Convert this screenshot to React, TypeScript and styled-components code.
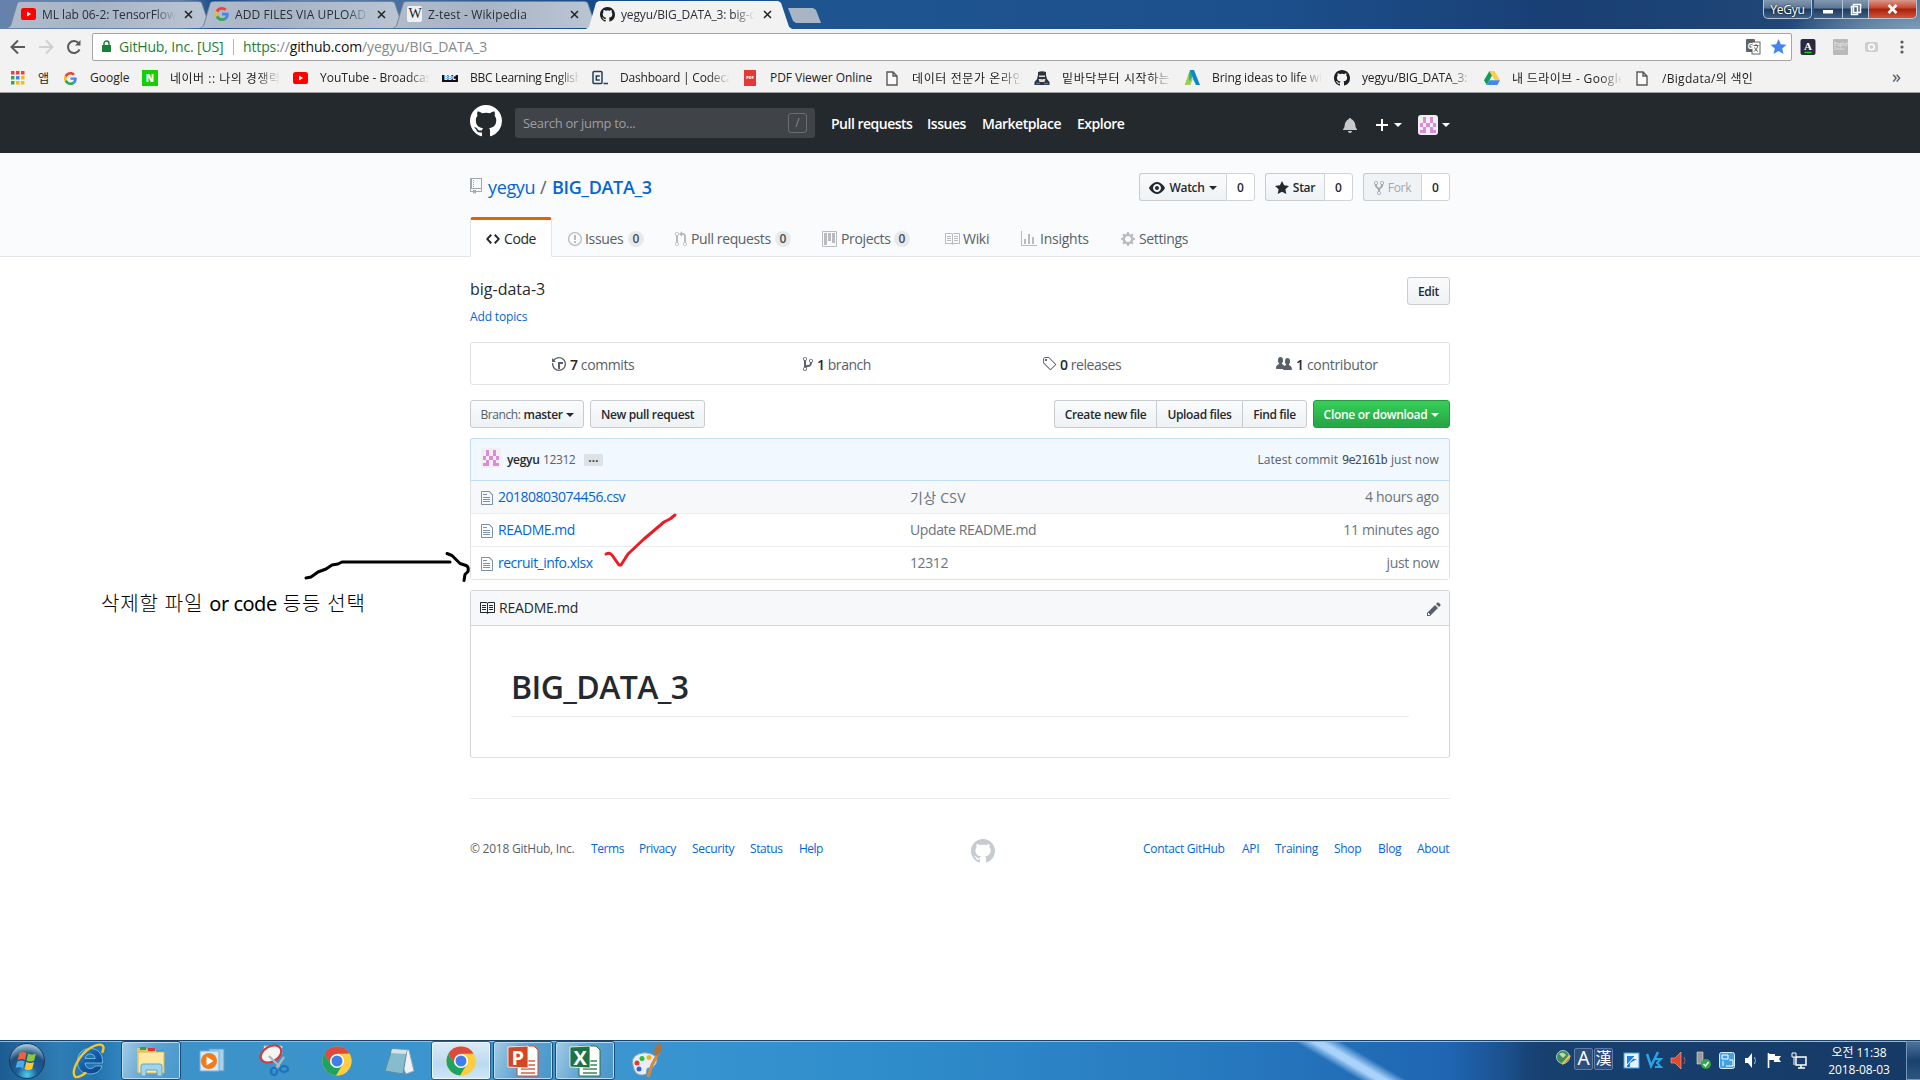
import React from 'react';
import styled, { createGlobalStyle, css } from 'styled-components';

const UI = '"Open Sans", "Noto Sans CJK KR", sans-serif';
const KR = '"Open Sans", "Noto Sans CJK KR", sans-serif';

const Global = createGlobalStyle`
  *, *::before, *::after { box-sizing: border-box; }
  body { margin: 0; background: #fff; font-family: ${UI}; color: #24292e; overflow: hidden; }
`;

/* ---------- shared ---------- */
const Screen = styled.div`
  position: relative; width: 1920px; height: 1080px; overflow: hidden;
  display: flex; flex-direction: column; background: #fff;
`;
const Label = styled.span<{ $w?: number; $ls?: number; $size?: number; $color?: string; $weight?: number; $fade?: boolean; $mr?: number }>`
  display: block; flex: none; white-space: nowrap; margin-right: ${p => p.$mr ?? 0}px;
  ${p => p.$w !== undefined && css`width: ${p.$w}px;`}
  letter-spacing: ${p => p.$ls ?? 0}px;
  ${p => p.$size && css`font-size: ${p.$size}px;`}
  ${p => p.$color && css`color: ${p.$color};`}
  ${p => p.$weight && css`font-weight: ${p.$weight};`}
  ${p => p.$fade && css`overflow: hidden; mask-image: linear-gradient(90deg, #000 calc(100% - 22px), transparent);`}
`;
const Caret = styled.i<{ $m?: number }>`
  display: block; flex: none; width: 0; height: 0; margin-left: ${p => p.$m ?? 4}px;
  border: 4px solid transparent; border-top-color: currentColor; border-bottom-width: 0;
`;

const OCT: Record<string, [number, string]> = {
  github: [16, 'M8 0C3.58 0 0 3.58 0 8c0 3.54 2.29 6.53 5.47 7.59.4.07.55-.17.55-.38 0-.19-.01-.82-.01-1.49-2.01.37-2.53-.49-2.69-.94-.09-.23-.48-.94-.82-1.13-.28-.15-.68-.52-.01-.53.63-.01 1.08.58 1.23.82.72 1.21 1.87.87 2.33.66.07-.52.28-.87.51-1.07-1.78-.2-3.64-.89-3.64-3.95 0-.87.31-1.59.82-2.15-.08-.2-.36-1.02.08-2.12 0 0 .67-.21 2.2.82.64-.18 1.32-.27 2-.27.68 0 1.36.09 2 .27 1.53-1.04 2.2-.82 2.2-.82.44 1.1.16 1.92.08 2.12.51.56.82 1.27.82 2.15 0 3.07-1.87 3.75-3.65 3.95.29.25.54.73.54 1.48 0 1.07-.01 1.93-.01 2.2 0 .21.15.46.55.38A8.013 8.013 0 0 0 16 8c0-4.42-3.58-8-8-8z'],
  repo: [12, 'M4 9H3V8h1v1zm0-3H3v1h1V6zm0-2H3v1h1V4zm0-2H3v1h1V2zm8-1v12c0 .55-.45 1-1 1H6v2l-1.5-1.5L3 16v-2H1c-.55 0-1-.45-1-1V1c0-.55.45-1 1-1h10c.55 0 1 .45 1 1zm-1 10H1v2h2v-1h3v1h5v-2zm0-10H2v9h9V1z'],
  code: [14, 'M9.5 3L8 4.5 11.5 8 8 11.5 9.5 13 14 8 9.5 3zm-5 0L0 8l4.5 5L6 11.5 2.5 8 6 4.5 4.5 3z'],
  issue: [14, 'M7 2.3c3.14 0 5.7 2.56 5.7 5.7s-2.56 5.7-5.7 5.7A5.71 5.71 0 0 1 1.3 8c0-3.14 2.56-5.7 5.7-5.7zM7 1C3.14 1 0 4.14 0 8s3.14 7 7 7 7-3.14 7-7-3.14-7-7-7zm1 3H6v5h2V4zm0 6H6v2h2v-2z'],
  pull: [12, 'M11 11.28V5c-.03-.78-.34-1.47-.94-2.06C9.46 2.35 8.78 2.03 8 2H7V0L4 3l3 3V4h1c.27.02.48.11.69.31.21.2.3.42.31.69v6.28A1.993 1.993 0 0 0 10 15a1.993 1.993 0 0 0 1-3.72zm-1 2.92c-.66 0-1.2-.55-1.2-1.2 0-.65.55-1.2 1.2-1.2.65 0 1.2.55 1.2 1.2 0 .65-.55 1.2-1.2 1.2zM4 3c0-1.11-.89-2-2-2a1.993 1.993 0 0 0-1 3.72v6.56A1.993 1.993 0 0 0 2 15a1.993 1.993 0 0 0 1-3.72V4.72c.59-.34 1-.98 1-1.72zm-.8 10c0 .66-.55 1.2-1.2 1.2-.65 0-1.2-.55-1.2-1.2 0-.65.55-1.2 1.2-1.2.65 0 1.2.55 1.2 1.2zM2 4.2C1.34 4.2.8 3.65.8 3c0-.65.55-1.2 1.2-1.2.65 0 1.2.55 1.2 1.2 0 .65-.55 1.2-1.2 1.2z'],
  project: [15, 'M10 12h3V2h-3v10zm-4-2h3V2H6v8zm-4 4h3V2H2v12zm-1 1h13V1H1v14zM14 0H1a1 1 0 0 0-1 1v14a1 1 0 0 0 1 1h13a1 1 0 0 0 1-1V1a1 1 0 0 0-1-1z'],
  book: [16, 'M3 5h4v1H3V5zm0 3h4V7H3v1zm0 2h4V9H3v1zm11-5h-4v1h4V5zm0 2h-4v1h4V7zm0 2h-4v1h4V9zm2-6v9c0 .55-.45 1-1 1H9.5l-1 1-1-1H2c-.55 0-1-.45-1-1V3c0-.55.45-1 1-1h5.5l1 1 1-1H15c.55 0 1 .45 1 1zm-8 .5L7.5 3H2v9h6V3.5zm7-.5H9.5l-.5.5V12h6V3z'],
  graph: [16, 'M16 14v1H0V0h1v14h15zM5 13H3V8h2v5zm4 0H7V3h2v10zm4 0h-2V6h2v7z'],
  gear: [14, 'M14 8.77v-1.6l-1.94-.64-.45-1.09.88-1.84-1.13-1.13-1.81.91-1.09-.45-.69-1.92h-1.6l-.63 1.94-1.11.45-1.84-.88-1.13 1.13.91 1.81-.45 1.09L0 7.23v1.59l1.94.64.45 1.09-.88 1.84 1.13 1.13 1.81-.91 1.09.45.69 1.92h1.59l.63-1.94 1.11-.45 1.84.88 1.13-1.13-.92-1.81.47-1.09L14 8.75v.02zM7 11c-1.66 0-3-1.34-3-3s1.34-3 3-3 3 1.34 3 3-1.34 3-3 3z'],
  eye: [16, 'M8.06 2C3 2 0 8 0 8s3 6 8.06 6C13 14 16 8 16 8s-3-6-7.94-6zM8 12c-2.2 0-4-1.78-4-4 0-2.2 1.8-4 4-4 2.22 0 4 1.8 4 4 0 2.22-1.78 4-4 4zm2-4c0 1.11-.89 2-2 2-1.11 0-2-.89-2-2 0-1.11.89-2 2-2 1.11 0 2 .89 2 2z'],
  star: [14, 'M14 6l-4.9-.64L7 1 4.9 5.36 0 6l3.6 3.26L2.67 14 7 11.67 11.33 14l-.93-4.74L14 6z'],
  fork: [10, 'M8 1a1.993 1.993 0 0 0-1 3.72V6L5 8 3 6V4.72A1.993 1.993 0 0 0 2 1a1.993 1.993 0 0 0-1 3.72V6.5l3 3v1.78A1.993 1.993 0 0 0 5 15a1.993 1.993 0 0 0 1-3.72V9.5l3-3V4.72A1.993 1.993 0 0 0 8 1zM2 4.2C1.34 4.2.8 3.65.8 3c0-.65.55-1.2 1.2-1.2.65 0 1.2.55 1.2 1.2 0 .65-.55 1.2-1.2 1.2zm3 10c-.66 0-1.2-.55-1.2-1.2 0-.65.55-1.2 1.2-1.2.65 0 1.2.55 1.2 1.2 0 .65-.55 1.2-1.2 1.2zm3-10c-.66 0-1.2-.55-1.2-1.2 0-.65.55-1.2 1.2-1.2.65 0 1.2.55 1.2 1.2 0 .65-.55 1.2-1.2 1.2z'],
  history: [14, 'M8 13H6V6h5v2H8v5zM7 1C4.81 1 2.87 2.02 1.59 3.59L0 2v4h4L2.5 4.5C3.55 3.17 5.17 2.3 7 2.3c3.14 0 5.7 2.56 5.7 5.7s-2.56 5.7-5.7 5.7A5.71 5.71 0 0 1 1.3 8c0-.34.03-.67.09-1H.08C.03 7.33 0 7.66 0 8c0 3.86 3.14 7 7 7s7-3.14 7-7-3.14-7-7-7z'],
  branch: [10, 'M10 5c0-1.11-.89-2-2-2a1.993 1.993 0 0 0-1 3.72v.3c-.02.52-.23.98-.63 1.38-.4.4-.86.61-1.38.63-.83.02-1.48.16-2 .45V4.72a1.993 1.993 0 0 0-1-3.72C.88 1 0 1.89 0 3a2 2 0 0 0 1 1.72v6.56c-.59.35-1 .99-1 1.72 0 1.11.89 2 2 2 1.11 0 2-.89 2-2 0-.53-.2-1-.53-1.36.09-.06.48-.41.59-.47.25-.11.56-.17.94-.17 1.05-.05 1.95-.45 2.75-1.25S8.95 7.77 9 6.73h-.02C9.59 6.37 10 5.73 10 5zM2 1.8c.66 0 1.2.55 1.2 1.2 0 .65-.55 1.2-1.2 1.2C1.35 4.2.8 3.65.8 3c0-.65.55-1.2 1.2-1.2zm0 12.41c-.66 0-1.2-.55-1.2-1.2 0-.65.55-1.2 1.2-1.2.65 0 1.2.55 1.2 1.2 0 .65-.55 1.2-1.2 1.2zm6-8c-.66 0-1.2-.55-1.2-1.2 0-.65.55-1.2 1.2-1.2.65 0 1.2.55 1.2 1.2 0 .65-.55 1.2-1.2 1.2z'],
  tag: [14, 'M7.685 1.72a2.49 2.49 0 0 0-1.76-.726H3.48A2.5 2.5 0 0 0 .994 3.48v2.456c0 .656.269 1.292.726 1.76l6.024 6.024a.99.99 0 0 0 1.402 0l4.563-4.563a.99.99 0 0 0 0-1.402L7.685 1.72zM2.366 7.048A1.54 1.54 0 0 1 1.9 5.925V3.48c0-.874.716-1.58 1.58-1.58h2.456c.418 0 .825.159 1.123.467l6.104 6.094-4.702 4.702-6.094-6.115zm.588-4.103h2v2h-2v-2z'],
  people: [16, 'M16 12.999c0 .439-.45 1-1 1H7.995c-.539 0-.994-.447-.995-.999H1c-.54 0-1-.561-1-1 0-2.634 3-4 3-4s.229-.409 0-1c-.841-.621-1.058-.59-1-3 .058-2.419 1.367-3 2.5-3s2.442.58 2.5 3c.058 2.41-.159 2.379-1 3-.229.59 0 1 0 1s1.549.711 2.42 2.088C9.196 9.369 10 8.999 10 8.999s.229-.409 0-1c-.841-.621-1.058-.59-1-3 .058-2.419 1.367-3 2.5-3s2.437.581 2.495 3c.059 2.41-.158 2.379-1 3-.229.59 0 1 0 1s3.005 1.366 3.005 4z'],
  file: [12, 'M6 5H2V4h4v1zM2 8h7V7H2v1zm0 2h7V9H2v1zm0 2h7v-1H2v1zm10-7.5V14c0 .55-.45 1-1 1H1c-.55 0-1-.45-1-1V2c0-.55.45-1 1-1h7.5L12 4.5zM11 5L8 2H1v12h10V5z'],
  bell: [14, 'M14 12v1H0v-1l.73-.58c.77-.77.81-2.55 1.19-4.42C2.69 3.23 6 2 6 2c0-.55.45-1 1-1s1 .45 1 1c0 0 3.39 1.23 4.16 5 .38 1.88.42 3.66 1.19 4.42l.66.58H14zm-7 4c1.11 0 2-.89 2-2H5c0 1.11.89 2 2 2z'],
  plus: [12, 'M12 9H7v5H5V9H0V7h5V2h2v5h5v2z'],
  pencil: [14, 'M0 12v3h3l8-8-3-3-8 8zm3 2H1v-2h1v1h1v1zm10.3-9.3L12 6 9 3l1.3-1.3a.996.996 0 0 1 1.41 0l1.59 1.59c.39.39.39 1.02 0 1.41z'],
};
const IconSvg = styled.svg<{ $c?: string; $mr?: number }>`
  display: block; flex: none; fill: ${p => p.$c ?? 'currentColor'}; margin-right: ${p => p.$mr ?? 0}px;
`;
const Oct = ({ n, c, mr, s = 16 }: { n: string; c?: string; mr?: number; s?: number }) => (
  <IconSvg viewBox={`0 0 ${OCT[n][0]} 16`} width={(OCT[n][0] * s) / 16} height={s} $c={c} $mr={mr}>
    <path fillRule="evenodd" d={OCT[n][1]} />
  </IconSvg>
);
const CELLS = [[1, 0], [3, 0], [1, 1], [3, 1], [0, 2], [2, 2], [4, 2], [1, 3], [3, 3], [0, 4], [1, 4], [3, 4], [4, 4]];
const AvatarSvg = styled.svg<{ $ml?: number }>`display: block; flex: none; border-radius: 3px; background: #f0f0f0; margin-left: ${p => p.$ml ?? 0}px;`;
const Avatar = ({ ml }: { ml?: number }) => (
  <AvatarSvg $ml={ml} width="20" height="20" viewBox="0 0 12 12" shapeRendering="crispEdges">
    {CELLS.map(([x, y]) => <rect key={`${x}${y}`} x={1 + x * 2} y={1 + y * 2} width="2" height="2" fill="#dd8ad9" />)}
  </AvatarSvg>
);

/* ---------- browser chrome ---------- */
const TitleBar = styled.div`
  height: 29px; flex: none; display: flex; align-items: flex-start; padding-left: 7px; position: relative;
  background: radial-gradient(ellipse 130px 26px at 100% 100%, #7f9cb6, transparent), linear-gradient(90deg, #6482ab 0, #6482ab 180px, #164a86 215px, #6482ab 300px, #164a86 590px, #1e5590 800px, #1c508d 1250px, #193f74 1560px, #1f4676 1780px, #56789c 1920px);
`;
const TabShape = styled.div<{ $active?: boolean }>`
  width: 206px; height: ${p => (p.$active ? 28 : 27)}px; margin: 1px -13px 0 0; flex: none; position: relative;
  z-index: ${p => (p.$active ? 2 : 1)};
  background: ${p => (p.$active ? '#f2f2f2' : '#6f83a0')};
  clip-path: polygon(0 100%, 3px 92%, 10px 6%, 13px 0, 192px 0, 195px 6%, 203px 92%, 206px 100%);
`;
const TabBody = styled.div<{ $active?: boolean }>`
  height: 100%; display: flex; align-items: center; padding-left: 14px; padding-bottom: ${p => (p.$active ? 2 : 1)}px;
  background: ${p => (p.$active ? '#f2f2f2' : 'linear-gradient(90deg, #b0bccb, #a7b4c6 40%, #bbc6d4)')};
  clip-path: ${p => (p.$active ? 'none' : 'polygon(1px 100%, 4px 92%, 11px 6%, 14px 1px, 191px 1px, 194px 6%, 202px 92%, 205px 100%)')};
  font-size: 12px; color: #2b2f36;
`;
const TabIcon = styled.span`width: 15px; margin-right: 6px; display: flex; justify-content: center;`;
const CloseSlot = styled.span`margin-left: 8px; display: flex;`;
const NewTab = styled.div`
  width: 33px; height: 15px; margin: 8px 0 0 9px; background: #a7b5c4; clip-path: polygon(0 0, 25px 0, 28px 2px, 33px 15px, 8px 15px, 5px 13px);
`;
const WinButtons = styled.div`
  margin-left: auto; margin-right: 3px; display: flex; height: 19px;
`;
const WinBtn = styled.div<{ $w: number; $kind?: 'close' | 'user' }>`
  width: ${p => p.$w}px; height: 19px; border: 1px solid #b5c3d2; border-top: 0; border-left-width: ${p => (p.$kind === 'user' ? 1 : 0)}px;
  ${p => p.$kind === 'user' && 'margin-right: 2px; border-radius: 0 0 5px 5px;'}
  ${p => p.$kind === 'close' && 'border-radius: 0 0 5px 0;'}
  background: ${p => (p.$kind === 'close' ? 'linear-gradient(#d99a8c, #c4452d 45%, #a91f0a 50%, #d0573a)' : 'linear-gradient(#8398b0, #5c7794 45%, #1c3a5e 50%, #3f6187)')};
  display: flex; align-items: center; justify-content: center; color: #fff; font: 12px ${UI}; letter-spacing: -.2px; text-shadow: 0 0 2px #000;
`;
const Toolbar = styled.div`
  height: 37px; flex: none; background: #f2f2f2; display: flex; align-items: center; padding: 0 0 1px 10px;
`;
const NavIcons = styled.svg`display: block; flex: none; width: 82px; height: 20px;`;
const UrlBar = styled.div`
  width: 1700px; height: 28px; border: 1px solid #a5a5a5; border-radius: 2px; background: #fff; flex: none;
  display: flex; align-items: center; padding-left: 9px; font-size: 14px; padding-bottom: 1px;
`;
const Lock = styled.svg`display: block; flex: none; margin-right: 8px;`;
const Secure = styled.span`color: #188038;`;
const Host = styled.span`color: #111;`;
const Divider = styled.span`width: 1px; height: 16px; background: #b5b5b5; margin: 0 9px;`;
const BarTail = styled.svg`display: block; margin-left: auto; margin-right: 2px;`;
const ExtIcons = styled.svg`display: block; flex: none;`;
const Bookmarks = styled.div`
  height: 27px; flex: none; background: #f2f2f2; border-bottom: 1px solid #a0a0a0; display: flex; align-items: center;
  padding: 0 0 2px 10px; font: 12px ${KR}; color: #222;
`;
const Mark = styled.div<{ $w: number }>`
  width: ${p => p.$w}px; flex: none; display: flex; align-items: center; height: 24px;
  & > ${Label} { margin-top: -1px; }
`;
const MarkIcon = styled.span`width: 16px; height: 24px; display: flex; align-items: center; justify-content: center; margin-right: 12px; flex: none;`;
const Chip = styled.b<{ $bg: string; $w?: number; $h?: number; $fs?: number; $r?: number; $c?: string }>`
  width: ${p => p.$w ?? 16}px; height: ${p => p.$h ?? 16}px; background: ${p => p.$bg}; color: ${p => p.$c ?? '#fff'}; border-radius: ${p => p.$r ?? 0}px;
  display: flex; align-items: center; justify-content: center; font-size: ${p => p.$fs ?? 10}px; line-height: 1; font-weight: 800; flex: none;
`;
const WikiChip = styled(Chip)`font-family: "Liberation Serif", serif; font-weight: 400; font-size: 14px; letter-spacing: -1px;`;
const MoreMarks = styled.span`margin: 0 19px 4px auto; font-size: 18px; color: #555;`;

const GoogleG = ({ s = 14 }: { s?: number }) => (
  <svg width={s} height={s} viewBox="0 0 48 48">
    <path fill="#EA4335" d="M24 9.5c3.54 0 6.71 1.22 9.21 3.6l6.85-6.85C35.9 2.38 30.47 0 24 0 14.62 0 6.51 5.38 2.56 13.22l7.98 6.19C12.43 13.72 17.74 9.5 24 9.5z" />
    <path fill="#4285F4" d="M46.98 24.55c0-1.57-.15-3.09-.38-4.55H24v9.02h12.94c-.58 2.96-2.26 5.48-4.78 7.18l7.73 6c4.51-4.18 7.09-10.36 7.09-17.65z" />
    <path fill="#FBBC05" d="M10.53 28.59c-.48-1.45-.76-2.99-.76-4.59s.27-3.14.76-4.59l-7.98-6.19C.92 16.46 0 20.12 0 24c0 3.88.92 7.54 2.56 10.78l7.97-6.19z" />
    <path fill="#34A853" d="M24 48c6.48 0 11.93-2.13 15.89-5.81l-7.73-6c-2.15 1.45-4.92 2.3-8.16 2.3-6.26 0-11.57-4.22-13.47-9.91l-7.98 6.19C6.51 42.62 14.62 48 24 48z" />
  </svg>
);
const YouTube = () => (
  <svg width="15" height="12" viewBox="0 0 15 12"><rect width="15" height="12" rx="2.6" fill="#f00" /><path d="M6 3.5l4 2.5L6 8.5z" fill="#fff" /></svg>
);
const Codecademy = () => (
  <svg width="16" height="16" viewBox="0 0 16 16" fill="none" stroke="#204056" strokeWidth="1.5">
    <rect x="1" y="1.5" width="9" height="12" rx="1" /><path d="M7.8 6H4.3v4h3.5M11.5 13.5H16" />
  </svg>
);
const PageIcon = () => (
  <svg width="12" height="15" viewBox="0 0 12 15"><path d="M1 1h6l4 4v9H1zM7 1v4h4" fill="#fafafa" stroke="#5a5a5a" strokeWidth="1.4" /></svg>
);
const Penguin = () => (
  <svg width="16" height="15" viewBox="0 0 16 15"><path d="M4 1q4-1.5 8 0v3l1 4 2.5 3v3H.5v-3L3 8l1-4z" fill="#2b3347" /><path d="M5 4.5h6V6H5zM4.5 8h3l.5 1 .5-1h3l-1 3h-5z" fill="#e5d9c8" /><path d="M2 12.5h4M10 12.5h4" stroke="#4a73b8" strokeWidth="1.5" /></svg>
);
const Autodesk = () => (
  <svg width="15" height="16" viewBox="0 0 15 16"><path d="M0 15L5 0h4L5 15z" fill="#3fae7d" /><path d="M0 15l4-12v8l4-2-3 6z" fill="#9fd14b" /><path d="M5 0h4l6 15h-4L8 9z" fill="#0b8ac9" /></svg>
);
const DriveIcon = () => (
  <svg width="16" height="14" viewBox="0 0 16 14"><path d="M5.5 0L0 9.3 2.7 14 8 4.5z" fill="#0f9d58" /><path d="M5.5 0h5L16 9.3h-5.3z" fill="#ffcd40" /><path d="M5.4 9.3H16L13.3 14H2.7z" fill="#4285f4" /></svg>
);
const Close = () => (
  <svg width="9" height="9" viewBox="0 0 9 9"><path d="M1 1l7 7M8 1L1 8" stroke="#222" strokeWidth="1.5" /></svg>
);

const TABS: { t: string; ls: number; icon: React.ReactNode; active?: boolean }[] = [
  { t: 'ML lab 06-2: TensorFlow로', ls: -0.05, icon: <YouTube /> },
  { t: 'ADD FILES VIA UPLOAD -', ls: 0.08, icon: <GoogleG /> },
  { t: 'Z-test - Wikipedia', ls: 0.15, icon: <WikiChip $bg="#eef1f4" $w={15} $h={16} $c="#222" $r={2}>W</WikiChip> },
  { t: 'yegyu/BIG_DATA_3: big-data', ls: -0.15, icon: <Oct n="github" s={15} c="#1b1f23" />, active: true },
];
const MARKS: { t: string; w?: number; tw?: number; ls?: number; icon: React.ReactNode }[] = [
  { t: 'Google', w: 80, tw: 50, icon: <GoogleG s={13} /> },
  { t: '네이버 :: 나의 경쟁력', ls: 0.5, icon: <Chip $bg="#19ce00" $h={16}>N</Chip> },
  { t: 'YouTube - Broadcast', icon: <YouTube /> },
  { t: 'BBC Learning English', ls: -0.3, icon: <Chip $bg="#111" $h={7} $fs={6}>BBC</Chip> },
  { t: 'Dashboard | Codecademy', ls: -0.2, icon: <Codecademy /> },
  { t: 'PDF Viewer Online', w: 142, tw: 110, ls: -0.05, icon: <Chip $bg="#e53935" $w={12} $h={16} $fs={4}>PDF</Chip> },
  { t: '데이터 전문가 온라인', ls: 0.6, icon: <PageIcon /> },
  { t: '밑바닥부터 시작하는 딥', ls: 0.6, icon: <Penguin /> },
  { t: 'Bring ideas to life with', ls: -0.1, icon: <Autodesk /> },
  { t: 'yegyu/BIG_DATA_3: big', ls: -0.15, icon: <Oct n="github" s={16} c="#1b1f23" /> },
  { t: '내 드라이브 - Google', ls: 0.35, icon: <DriveIcon /> },
  { t: '/Bigdata/의 색인', ls: 0.3, icon: <PageIcon /> },
];

/* ---------- GitHub header ---------- */
const GhHeader = styled.header`
  height: 60px; flex: none; background: #24292e; padding: 0 470px; display: flex; align-items: center; color: #fff;
`;
const LogoBox = styled.span`margin: -4px 13px 0 0; align-self: center;`;
const Search = styled.div`
  width: 300px; height: 30px; border-radius: 3px; background: #404448; display: flex; align-items: center; justify-content: space-between;
  padding: 0 8px; font-size: 13px; color: #9c9fa3; margin-right: 16px; flex: none;
`;
const SlashKey = styled.span`
  width: 19px; height: 20px; border: 1px solid #6a6d71; border-radius: 3px; font-size: 12px; text-align: center; line-height: 17px; color: #85888c;
`;
const NavLink = styled.a<{ $w: number; $ls: number }>`
  width: ${p => p.$w}px; letter-spacing: ${p => p.$ls}px; font-size: 14px; font-weight: 600; white-space: nowrap; flex: none; color: #fff; padding-top: 1px;
`;
const UserTools = styled.div`margin-left: auto; display: flex; align-items: center; padding-top: 4px;`;

/* ---------- repo head ---------- */
const RepoHead = styled.section`
  height: 104px; flex: none; padding: 20px 470px 0; background: #fafbfc; border-bottom: 1px solid #e1e4e8;
  display: flex; flex-direction: column; justify-content: space-between;
`;
const TitleRow = styled.div`display: flex; align-items: center; height: 28px;`;
const RepoName = styled.h1`
  margin: 0; display: flex; align-items: center; font-size: 18px; font-weight: 400; line-height: 28px; color: #0366d6;
  & > svg { margin-top: -2px; }
`;
const Actions = styled.div`margin-left: auto; display: flex; gap: 10px;`;
const Group = styled.div`display: flex; height: 28px;`;
const Btn = styled.button<{ $w: number; $first?: boolean; $last?: boolean; $flat?: boolean; $green?: boolean; $off?: boolean; $ls?: number }>`
  width: ${p => p.$w}px; height: 28px; padding: 1px 0 0; flex: none; display: flex; align-items: center; justify-content: center;
  border: 1px solid #c9cccf; font: 600 12px ${UI}; letter-spacing: ${p => p.$ls ?? -0.3}px; color: #24292e; white-space: nowrap;
  background: linear-gradient(-180deg, #fafbfc, #eff3f6 90%);
  border-radius: ${p => (p.$first ? '3px 0 0 3px' : p.$last ? '0 3px 3px 0' : p.$flat ? '0' : '3px')};
  ${p => (p.$first || p.$flat) && 'border-right: 0;'}
  ${p => p.$off && 'color: #a3a7ab; background: #eff3f6; font-weight: 400;'}
  ${p => p.$green && 'color: #fff; border-color: #2a9742; background: linear-gradient(-180deg, #34d058, #28a745 90%);'}
`;
const Count = styled.span<{ $w: number }>`
  width: ${p => p.$w}px; height: 28px; border: 1px solid #d1d4d7; border-radius: 0 3px 3px 0; background: #fff;
  display: flex; align-items: center; justify-content: center; font-size: 12px; font-weight: 600;
`;
const Tabs = styled.nav`display: flex; height: 40px; margin-bottom: -1px; font-size: 14px; color: #586069;`;
const RepoTab = styled.a<{ $w: number; $on?: boolean }>`
  width: ${p => p.$w}px; height: 40px; flex: none; display: flex; align-items: center; padding: 1px 0 0 15px;
  border: 1px solid transparent; border-top: 3px solid transparent;
  ${p => p.$on && css`background: #fff; border-color: #e36209 #e1e4e8 transparent; border-radius: 3px 3px 0 0; color: #24292e;`}
`;
const Counter = styled.span`
  height: 16px; width: 16px; margin-left: 5px; border-radius: 10px; background: #e7e9eb; font-size: 12px; font-weight: 600; line-height: 15px; text-align: center; color: #444d56;
`;
const TabText = styled.span<{ $w: number; $ls: number }>`
  width: ${p => p.$w}px; letter-spacing: ${p => p.$ls}px; white-space: nowrap; flex: none; padding-bottom: 1px;
`;

/* ---------- repo content ---------- */
const Main = styled.main`width: 980px; margin-left: 470px; flex: 1; display: flex; flex-direction: column;`;
const AboutRow = styled.div`display: flex; justify-content: space-between; align-items: flex-start; padding-top: 20px; height: 85px;`;
const AboutText = styled.div`display: flex; flex-direction: column; gap: 4px; & > span:first-child { line-height: 24px; } & > a { line-height: 24px; font-size: 12px; letter-spacing: -.15px; color: #0366d6; }`;
const Stats = styled.div`
  height: 43px; border: 1px solid #dfe2e5; border-radius: 3px; display: flex; align-items: center; font-size: 14px; color: #586069; padding: 1px 0 0 81px;
`;
const Stat = styled.span<{ $w: number; $ls?: number }>`
  width: ${p => p.$w}px; letter-spacing: ${p => p.$ls ?? -0.36}px; flex: none; display: flex; align-items: center; gap: 4px; white-space: nowrap;
  & b { font-weight: 600; color: #24292e; }
`;
const FileNav = styled.div`display: flex; gap: 6px; margin-top: 15px; height: 28px;`;
const FileBtns = styled.div`display: flex; margin-left: auto;`;
const FilesBox = styled.div`margin-top: 10px; border: 1px solid #dfe2e5; border-radius: 3px; height: 142px;`;
const Commit = styled.div`
  height: 43px; margin: -1px -1px 0; border: 1px solid #c0ddfb; border-radius: 3px 3px 0 0; background: #f1f8ff;
  display: flex; align-items: center; padding: 0 10px; font-size: 12px; color: #586069; padding-bottom: 1px;
  & > svg { margin-right: 6px; margin-top: -2px; }
`;
const Dots = styled.span`
  width: 19px; height: 12px; background: #dfe2e5; border-radius: 1px; margin: 2px 0 0 9px; font-size: 12px; font-weight: 700; line-height: 8px; text-align: center; color: #444d56;
`;
const Latest = styled.span`margin-left: auto; display: flex; align-items: baseline; gap: 4px; letter-spacing: .08px;`;
const Hash = styled.code`font: 12px "DejaVu Sans Mono", monospace; letter-spacing: -.8px; color: #444d56;`;
const FileRow = styled.div<{ $hover?: boolean }>`
  height: ${p => (p.$hover ? 32 : 33)}px; display: flex; align-items: center; padding: 0 10px; font-size: 14px; color: #6a737d;
  background: ${p => (p.$hover ? '#f6f8fa' : '#fff')}; padding-bottom: 1px;
  & > svg { margin-top: 2px; }
  & + & { border-top: 1px solid #eaecef; }
`;
const Age = styled.span<{ $ls: number }>`margin-left: auto; letter-spacing: ${p => p.$ls}px;`;
const Readme = styled.article`margin-top: 10px; height: 168px; border: 1px solid #d1d5da; border-bottom-color: #dfe2e5; border-radius: 3px;`;
const ReadmeHead = styled.h3`
  margin: 0; height: 35px; background: #f6f8fa; border-bottom: 1px solid #d1d5da; display: flex; align-items: center; padding: 0 9px 1px 8px;
  font-size: 14px; font-weight: 500; & svg:last-child { margin-left: auto; margin-right: -1px; margin-top: 2px; }
`;
const ReadmeBody = styled.div`padding: 41px 40px 0;`;
const Heading = styled.h1`
  margin: 0; height: 50px; border-bottom: 1px solid #eaecef; font-size: 32px; font-weight: 600; line-height: 40px; letter-spacing: -.6px;
`;
const Footer = styled.footer`
  margin-top: 40px; border-top: 1px solid #eaecef; padding-top: 24px; display: flex; align-items: center; height: 76px; font-size: 12px; color: #586069;
`;
const FootLink = styled.a<{ $w: number; $ls?: number; $plain?: boolean }>`
  width: ${p => p.$w}px; letter-spacing: ${p => p.$ls ?? -0.3}px; flex: none; white-space: nowrap; color: ${p => (p.$plain ? '#586069' : '#0366d6')};
`;
const FootLogo = styled.span`margin: 5px 0 0 148px; width: 172px;`;

/* ---------- annotations drawn over the page ---------- */
const Ink = styled.svg`position: absolute; left: 290px; top: 500px; width: 400px; height: 100px; fill: none; stroke-linecap: round; stroke-linejoin: round; pointer-events: none;`;
const Note = styled.div`position: absolute; left: 101px; top: 590px; font: 300 20px/28px "Noto Sans", "Noto Sans CJK KR", sans-serif; letter-spacing: .85px; white-space: nowrap; color: #000; & b { font-weight: 400; letter-spacing: -.5px; }`;

/* ---------- Windows taskbar ---------- */
const Taskbar = styled.div`
  height: 40px; flex: none; border-top: 1px solid #1d4368; box-shadow: inset 0 1px 0 #8fbfe0; display: flex; align-items: stretch; position: relative;
  background: linear-gradient(90deg, transparent 1510px, #17406f 1550px, #163a66 1920px),
    linear-gradient(30.5deg, transparent 690px, #a9d3fb 699px, #a9d3fb 704px, transparent 714px),
    linear-gradient(90deg, #1c5c92 0, #2f7db4 60px, #2273ae 95px, #3c92c8 140px, #3b96d0 600px, #2f8ccb 900px, #2677bd 1250px, #1f65b2 1450px, #17406f 1550px);
`;
const StartSlot = styled.div`width: 53px; display: flex; align-items: center; justify-content: center; margin-right: 6px;`;
const Task = styled.div<{ $open?: boolean; $active?: boolean }>`
  width: 60px; margin-right: 2px; flex: none; display: flex; align-items: center; justify-content: center; border-radius: 3px; border: 1px solid transparent;
  ${p => p.$open && 'border-color: #1d4c76; background: linear-gradient(110deg, #a5cbe5, #5ba3d2 50%, #4897cc); box-shadow: inset 0 0 0 1px #b9dcf2;'}
  ${p => p.$active && 'border-color: #2a5f8c; background: linear-gradient(#dcebf6, #bcd9ee 60%, #cfe8f8); box-shadow: inset 0 0 0 1px #eef8ff;'}
`;
const Tray = styled.div`margin-left: auto; display: flex; align-items: center; color: #fff;`;
const TrayGlobe = styled.svg`display: block; margin: -5px 1px 0 0;`;
const Ime = styled.span<{ $fs: number }>`
  width: 19px; height: 22px; margin-right: 1px; margin-top: -4px; border: 1px solid #5d7ea6; border-radius: 2px; background: #2c4f7c; font-size: ${p => p.$fs}px; line-height: 18px; text-align: center; font-family: "Noto Sans", "Noto Sans CJK KR", sans-serif;
`;
const TrayIcons = styled.svg`display: block; flex: none; margin-top: 1px;`;
const Clock = styled.div`width: 94px; text-align: center; font: 12px ${KR}; letter-spacing: -.1px; line-height: 17px; padding-top: 1px;`;
const ShowDesktop = styled.div`width: 14px; height: 39px; border: 1px solid #7795b8; border-right: 0; background: linear-gradient(#4d729b, #1a416e 50%, #2c5680);`;

const Chrome = () => (
  <svg width="30" height="30" viewBox="0 0 30 30">
    <circle cx="15" cy="15" r="14.5" fill="#fbc116" />
    <path d="M2.4 7.8A14.5 14.5 0 0 1 27.6 7.8L15 8.2l-6.4 10z" fill="#dd4b3e" />
    <path d="M2.4 7.8A14.5 14.5 0 0 0 14 29.5l6.5-10.8H9z" fill="#1ea362" />
    <path d="M27.6 7.8H15l5.8 11L14.5 29.5A14.5 14.5 0 0 0 27.6 7.8z" fill="#ffcd40" />
    <circle cx="15" cy="15" r="7" fill="#fff" /><circle cx="15" cy="15" r="5.5" fill="#3f7fe8" />
  </svg>
);
const StartOrb = () => (
  <svg width="38" height="38" viewBox="0 0 38 38">
    <defs><radialGradient id="orb" cx="50%" cy="90%" r="85%"><stop offset="0" stopColor="#4fd0f0" /><stop offset=".35" stopColor="#1b5f9a" /><stop offset=".7" stopColor="#1d4f7e" /><stop offset="1" stopColor="#a3c1d6" /></radialGradient></defs>
    <circle cx="19" cy="19" r="17.5" fill="url(#orb)" stroke="#163a5e" />
    <path d="M11.5 11q3.5-2 7 0L17 18q-3.500-2-7.500 0z" fill="#f0623a" /><path d="M20 11.5q4 2 8 0l-1.8 7q-3.5 2-7.7 0z" fill="#8cc63f" />
    <path d="M9.2 19.5q4-2 7.5 0l-1.6 7q-3.5-2-7.5-.5z" fill="#4fa8e8" /><path d="M18.2 20q4 2 7.8 0l-1.8 7q-4 2-7.5 0z" fill="#fdc92f" />
  </svg>
);
const IE = () => (
  <svg width="36" height="38" viewBox="0 0 36 38">
    <defs><linearGradient id="ie" x1="0" y1="0" x2="1" y2="1"><stop offset="0" stopColor="#3ba4e4" /><stop offset=".4" stopColor="#1460ab" /><stop offset="1" stopColor="#0c3f86" /></linearGradient></defs>
    <path fillRule="evenodd" d="M19 6.5c8 0 13 5.5 12.5 14.500H14c.3 3.500 2.200 5.500 5.300 5.500 2.200 0 3.700-.8 4.700-2.500h7C29.500 29 25 32 19 32 11 32 6.500 27 6.500 19.500S11 6.500 19 6.500zM14.200 16.500h10c-.3-3-2.100-4.500-5-4.500s-4.600 1.500-5 4.500z" fill="url(#ie)" stroke="#8fd6f8" strokeWidth=".7" />
    <path d="M4.500 35C-.5 31 7 13 20 5.500 29 .5 35 2 31.500 10M4.500 35q3 1 10-4" fill="none" stroke="#f6c62d" strokeWidth="2.400" strokeLinecap="round" />
  </svg>
);
const Explorer = () => (
  <svg width="34" height="34" viewBox="0 0 34 34">
    <path d="M3 4h9l2 2h15v22H3z" fill="#e9c95c" /><path d="M6 3h6v3H6z" fill="#3c9a4f" /><path d="M14 4h7v3h-7z" fill="#d33" /><path d="M22 6h8v3h-8z" fill="#39c" />
    <path d="M4 8h26v21H4z" fill="#fbe9a2" stroke="#d8b64a" /><path d="M7 32V22q0-2 2-2h17q2 0 2 2v10h-5v-6H12v6z" fill="#9fd4ef" stroke="#5fa5cf" />
  </svg>
);
const Media = () => (
  <svg width="28" height="28" viewBox="0 0 28 28"><path d="M10 2h15v22H10z" fill="#a8d1ec" stroke="#5d9bc8" /><path d="M1 4h19v20H1z" fill="#d5e9f7" stroke="#79add2" /><circle cx="10" cy="14" r="8" fill="#f07b1a" /><path d="M7.5 9.5l7 4.5-7 4.5z" fill="#fff" /></svg>
);
const Snip = () => (
  <svg width="32" height="36" viewBox="0 0 32 36">
    <path d="M5 3h18v8H5z" fill="#e9f1f7" stroke="#b9c6d0" strokeDasharray="2 1" />
    <ellipse cx="12" cy="11" rx="11" ry="7.500" transform="rotate(-30 12 11)" fill="#f4f4f4" stroke="#d33c3c" strokeWidth="2.200" />
    <path d="M10 13l12 12M25 14l-9 13" stroke="#a9b8c4" strokeWidth="2.400" />
    <ellipse cx="15" cy="28.500" rx="3" ry="3.600" fill="none" stroke="#1e73be" strokeWidth="2.400" /><ellipse cx="25" cy="26" rx="4" ry="3" fill="none" stroke="#1e73be" strokeWidth="2.400" />
  </svg>
);
const Notepad = () => (
  <svg width="32" height="32" viewBox="0 0 32 32"><path d="M11 4l15 1 5 21-8 3z" fill="#eef2f4" stroke="#90a4b0" /><path d="M9 4l15 1-4 24-18-3z" fill="#86bccb" stroke="#5a8f9e" /><path d="M9 4l15 1-1 4-15-1z" fill="#d4e5ea" /></svg>
);
const Office = ({ color, letter }: { color: string; letter: string }) => (
  <svg width="32" height="34" viewBox="0 0 32 34"><path d="M10 2h17l4 4v26H10z" fill="#fff" stroke={color} /><path d="M18 17h10M16 21h12M14 25h14M14 29h14" stroke={color} strokeWidth="2" opacity=".65" /><path d="M1 3l20-1v22L1 23z" fill={color} stroke="#fff" strokeWidth=".8" /><text x="4.500" y="20.500" fontFamily="Open Sans" fontSize="20" fontWeight="700" fill="#fff">{letter}</text></svg>
);
const Paint = () => (
  <svg width="34" height="36" viewBox="0 0 34 36"><path d="M3 22C0 14 9 9 17 10s13 6 8 12-7 1-8 4 1 6-5 6-8-4-9-10z" fill="#e7eef4" stroke="#8aa5b9" /><circle cx="7" cy="20" r="2.500" fill="#e33" /><circle cx="12" cy="15.500" r="2.500" fill="#3b3" /><circle cx="19" cy="14.500" r="2.500" fill="#f0b51c" /><circle cx="9" cy="26" r="2.500" fill="#36c" /><path d="M29 9l-7 13-4 12" stroke="#d08a45" strokeWidth="3.200" fill="none" /><path d="M25 3q4-4 7-2l-1 8-4 4-3-3z" fill="#a9743d" /></svg>
);

const FILES = [
  { n: '20180803074456.csv', m: '기상 CSV', a: '4 hours ago', ls: -0.5, mls: 0.25, als: -0.27 },
  { n: 'README.md', m: 'Update README.md', a: '11 minutes ago', ls: -0.45, mls: -0.4, als: -0.32 },
  { n: 'recruit_info.xlsx', m: '12312', a: 'just now', ls: -0.5, mls: -0.4, als: -0.35 },
];

export default function App() {
  return (
    <Screen>
      <Global />
      <TitleBar>
        {TABS.map(t => (
          <TabShape key={t.t} $active={t.active}>
            <TabBody $active={t.active}>
              <TabIcon>{t.icon}</TabIcon>
              <Label $w={134} $ls={t.ls} $fade>{t.t}</Label>
              <CloseSlot><Close /></CloseSlot>
            </TabBody>
          </TabShape>
        ))}
        <NewTab />
        <WinButtons>
          <WinBtn $w={49} $kind="user">YeGyu</WinBtn>
          <WinBtn $w={29}><svg width="12" height="12"><path d="M1 7h10v3.500H1z" fill="#fff" /></svg></WinBtn>
          <WinBtn $w={26}><svg width="13" height="13"><path d="M4.500 1.500h7v8h-7zM2.500 3.500h6v8h-6z" fill="#46648a" stroke="#fff" strokeWidth="1.500" /></svg></WinBtn>
          <WinBtn $w={48} $kind="close"><svg width="11" height="10"><path d="M1.500 1l8 8M9.500 1l-8 8" stroke="#fff" strokeWidth="2.600" /></svg></WinBtn>
        </WinButtons>
      </TitleBar>
      <Toolbar>
        <NavIcons viewBox="0 0 82 20" fill="none" strokeWidth="2">
          <path d="M15 10H2M8 3.500L1.500 10 8 16.500" stroke="#5a5a5a" />
          <path d="M29 10h13M36 3.500l6.500 6.500-6.500 6.500" stroke="#d0d0d0" />
          <path d="M69.500 12.500a6 6 0 1 1-.8-6.200" stroke="#5a5a5a" /><path d="M70.500 3v5.500H65z" fill="#5a5a5a" />
        </NavIcons>
        <UrlBar>
          <Lock width="9" height="13" viewBox="0 0 9 13"><path d="M0 5h9v7H0z" fill="#188038" /><path d="M2 6V3.500a2.500 2.500 0 0 1 5 0V6" fill="none" stroke="#188038" strokeWidth="1.400" /></Lock>
          <Label $w={105} $ls={-0.15} $color="#188038">GitHub, Inc. [US]</Label>
          <Divider />
          <Label $color="#85898d" $ls={-0.13}><Secure>https</Secure>://<Host>github.com</Host>/yegyu/BIG_DATA_3</Label>
          <BarTail width="44" height="18" viewBox="0 0 44 18">
            <rect x="1" y="1" width="9" height="13" rx="1" fill="#5f6368" /><rect x="7" y="4" width="8" height="12" fill="#fff" stroke="#5f6368" />
            <text x="2.500" y="11" fontSize="8" fontFamily="Open Sans" fontWeight="700" fill="#fff">G</text><path d="M8.500 7.500h5M11 6v1.500M13 7.500q-1 4-4 6M9.500 9.500q1 3 3.500 4" stroke="#5f6368" fill="none" />
            <path d="M33.500 1l2.300 5.200 5.700.5-4.300 3.800 1.300 5.500-5-3-5 3 1.300-5.500-4.300-3.800 5.700-.5z" fill="#4285f4" />
          </BarTail>
        </UrlBar>
        <ExtIcons width="128" height="18" viewBox="0 0 128 18">
          <rect x="8.500" y="1" width="15" height="16" rx="2" fill="#2b2940" /><text x="12" y="12" fontSize="11" fontFamily="Liberation Serif" fontWeight="700" fill="#fff">A</text><path d="M12.500 14.500h7" stroke="#1bd11b" strokeWidth="1.500" />
          <rect x="41" y="1" width="15" height="16" rx="1" fill="#b9b9b9" /><text x="42" y="7.500" fontSize="4.500" fontFamily="Open Sans" fill="#eee">English</text><text x="42" y="12" fontSize="4" fontFamily="Open Sans" fill="#eee">Dictio</text>
          <rect x="73" y="4" width="13" height="10" rx="2" fill="#cfcfcf" /><circle cx="79.500" cy="9" r="2.800" fill="none" stroke="#fff" strokeWidth="1.500" />
          <circle cx="110" cy="4" r="1.600" fill="#5a5a5a" /><circle cx="110" cy="9" r="1.600" fill="#5a5a5a" /><circle cx="110" cy="14" r="1.600" fill="#5a5a5a" />
        </ExtIcons>
      </Toolbar>
      <Bookmarks>
        <Mark $w={52}>
          <MarkIcon>
            <svg width="14" height="14" viewBox="0 0 14 14">
              {['#ea4335', '#ea4335', '#ea4335', '#34a853', '#4285f4', '#fbbc05', '#34a853', '#fbbc05', '#fbbc05'].map((c, i) => (
                <rect key={i} x={(i % 3) * 5} y={Math.floor(i / 3) * 5} width="3.500" height="3.500" fill={c} />
              ))}
            </svg>
          </MarkIcon>
          <Label>앱</Label>
        </Mark>
        {MARKS.map(m => (
          <Mark key={m.t} $w={m.w ?? 150}>
            <MarkIcon>{m.icon}</MarkIcon>
            <Label $w={m.tw ?? 110} $ls={m.ls ?? 0} $fade={!m.tw}>{m.t}</Label>
          </Mark>
        ))}
        <MoreMarks>»</MoreMarks>
      </Bookmarks>

      <GhHeader>
        <LogoBox><Oct n="github" s={32} c="#fff" /></LogoBox>
        <Search><Label $ls={-0.3}>Search or jump to...</Label><SlashKey>/</SlashKey></Search>
        <NavLink $w={96} $ls={-0.5}>Pull requests</NavLink>
        <NavLink $w={55} $ls={-0.45}>Issues</NavLink>
        <NavLink $w={95} $ls={-0.5}>Marketplace</NavLink>
        <NavLink $w={50} $ls={-0.5}>Explore</NavLink>
        <UserTools>
          <Oct n="bell" c="#c8c9cb" mr={19} />
          <Oct n="plus" c="#fff" /><Caret $m={6} />
          <Avatar ml={16} /><Caret $m={4} />
        </UserTools>
      </GhHeader>

      <RepoHead>
        <TitleRow>
          <RepoName>
            <Oct n="repo" c="#a3a8ae" mr={6} />
            <Label $w={52} $ls={-0.35}>yegyu</Label>
            <Label $w={12} $color="#586069">/</Label>
            <Label $weight={600} $ls={-0.35}>BIG_DATA_3</Label>
          </RepoName>
          <Actions>
            <Group><Btn $w={87} $first><Oct n="eye" mr={4} />Watch<Caret /></Btn><Count $w={29}>0</Count></Group>
            <Group><Btn $w={59} $first><Oct n="star" mr={4} />Star</Btn><Count $w={29}>0</Count></Group>
            <Group><Btn $w={58} $first $off><Oct n="fork" mr={4} />Fork</Btn><Count $w={29}>0</Count></Group>
          </Actions>
        </TitleRow>
        <Tabs>
          <RepoTab $w={82} $on><Oct n="code" mr={4} /><TabText $w={34} $ls={-0.4}>Code</TabText></RepoTab>
          <RepoTab $w={107}><Oct n="issue" c="#b8bcc0" mr={3} /><TabText $w={38} $ls={-0.35}>Issues</TabText><Counter>0</Counter></RepoTab>
          <RepoTab $w={147}><Oct n="pull" c="#b8bcc0" mr={4} /><TabText $w={79} $ls={-0.38}>Pull requests</TabText><Counter>0</Counter></RepoTab>
          <RepoTab $w={122}><Oct n="project" c="#b8bcc0" mr={4} /><TabText $w={48} $ls={-0.35}>Projects</TabText><Counter>0</Counter></RepoTab>
          <RepoTab $w={77}><Oct n="book" c="#b8bcc0" mr={3} /><TabText $w={30} $ls={-0.3}>Wiki</TabText></RepoTab>
          <RepoTab $w={100}><Oct n="graph" c="#b8bcc0" mr={3} /><TabText $w={50} $ls={-0.25}>Insights</TabText></RepoTab>
          <RepoTab $w={90}><Oct n="gear" c="#b8bcc0" mr={4} /><TabText $w={50} $ls={-0.35}>Settings</TabText></RepoTab>
        </Tabs>
      </RepoHead>

      <Main>
        <AboutRow>
          <AboutText><Label $size={16} $ls={0}>big-data-3</Label><a>Add topics</a></AboutText>
          <Btn $w={43}>Edit</Btn>
        </AboutRow>
        <Stats>
          <Stat $w={251} $ls={-0.4}><Oct n="history" /><span><b>7</b> commits</span></Stat>
          <Stat $w={239} $ls={-0.45}><Oct n="branch" /><span><b>1</b> branch</span></Stat>
          <Stat $w={234} $ls={-0.45}><Oct n="tag" /><span><b>0</b> releases</span></Stat>
          <Stat $w={110} $ls={-0.33}><Oct n="people" /><span><b>1</b> contributor</span></Stat>
        </Stats>
        <FileNav>
          <Btn $w={114}><Label $weight={400} $color="#586069" $ls={-0.4} $mr={3}>Branch:</Label><Label $ls={-0.35}>master</Label><Caret $m={3} /></Btn>
          <Btn $w={115} $ls={-0.35}>New pull request</Btn>
          <FileBtns>
            <Btn $w={102} $first $ls={-0.35}>Create new file</Btn>
            <Btn $w={86} $flat $ls={-0.35}>Upload files</Btn>
            <Btn $w={65} $last $ls={-0.35}>Find file</Btn>
          </FileBtns>
          <Btn $w={137} $green>Clone or download<Caret /></Btn>
        </FileNav>
        <FilesBox>
          <Commit>
            <Avatar />
            <Label $w={36} $weight={600} $color="#24292e" $ls={-0.3}>yegyu</Label>
            <Label $w={32} $ls={-0.4}>12312</Label>
            <Dots>…</Dots>
            <Latest><span>Latest commit</span><Hash>9e2161b</Hash><span>just now</span></Latest>
          </Commit>
          {FILES.map((f, i) => (
            <FileRow key={f.n} $hover={i === 0}>
              <Oct n="file" c="#7992ad" mr={5} />
              <Label $w={412} $ls={f.ls} $color="#0366d6">{f.n}</Label>
              <Label $w={200} $ls={f.mls}>{f.m}</Label>
              <Age $ls={f.als}>{f.a}</Age>
            </FileRow>
          ))}
        </FilesBox>
        <Readme>
          <ReadmeHead><Oct n="book" mr={4} /><Label $ls={-0.2}>README.md</Label><Oct n="pencil" c="#586069" /></ReadmeHead>
          <ReadmeBody><Heading>BIG_DATA_3</Heading></ReadmeBody>
        </Readme>
        <Footer>
          <FootLink $w={121} $plain $ls={-0.24}>© 2018 GitHub, Inc.</FootLink>
          <FootLink $w={48} $ls={-0.4}>Terms</FootLink>
          <FootLink $w={53} $ls={-0.4}>Privacy</FootLink>
          <FootLink $w={58}>Security</FootLink>
          <FootLink $w={49} $ls={-0.4}>Status</FootLink>
          <FootLink $w={24} $ls={-0.5}>Help</FootLink>
          <FootLogo><Oct n="github" s={24} c="#c6cbd1" /></FootLogo>
          <FootLink $w={99}>Contact GitHub</FootLink>
          <FootLink $w={33}>API</FootLink>
          <FootLink $w={59}>Training</FootLink>
          <FootLink $w={44}>Shop</FootLink>
          <FootLink $w={39}>Blog</FootLink>
          <FootLink $w={33}>About</FootLink>
        </Footer>
      </Main>

      <Ink viewBox="290 500 400 100">
        <path d="M306 578l5-1 7-5 8-3 6-4 6-1 4-2h108" stroke="#000" strokeWidth="3" />
        <path d="M447 553.500l5 2 8 8 6 2q3 1 2 6l-3 3-1 6" stroke="#000" strokeWidth="3" />
        <path d="M606 554q4-2 6 1l7 10h2l7-11 16-15 20-17 6-3 5-4" stroke="#ed1c24" strokeWidth="3" />
      </Ink>
      <Note>삭제할 파일 <b>or code</b> 등등 선택</Note>

      <Taskbar>
        <StartSlot><StartOrb /></StartSlot>
        <Task><IE /></Task>
        <Task $open><Explorer /></Task>
        <Task><Media /></Task>
        <Task><Snip /></Task>
        <Task><Chrome /></Task>
        <Task><Notepad /></Task>
        <Task $open $active><Chrome /></Task>
        <Task $open><Office color="#d24726" letter="P" /></Task>
        <Task $open><Office color="#1f7244" letter="X" /></Task>
        <Task><Paint /></Task>
        <Tray>
          <TrayGlobe width="18" height="18" viewBox="0 0 18 18"><circle cx="8" cy="8" r="6.500" fill="#3a8f5a" stroke="#a8cbe0" /><path d="M4 5q4-3 7 1l-3 3z" fill="#c8d6a0" /><path d="M16 7l-7 8-2 1 .5-2.500L14 6z" fill="#f1bf55" /></TrayGlobe>
          <Ime $fs={19}>A</Ime><Ime $fs={16}>漢</Ime>
          <TrayIcons width="198" height="20" viewBox="1615 0 198 20">
            <rect x="1625" y="2" width="15" height="15" fill="#e6f2ff" stroke="#3da0ee" /><path d="M1628 5h8l-2 3h4l-7 4v4h-3z" fill="#1a7fe0" /><path d="M1627 15l10-11" stroke="#fff" />
            <path d="M1648 3l4 12 7-14" fill="none" stroke="#2aa5e8" strokeWidth="2.500" /><path d="M1656 8h6l-4 4 4 4h-6" fill="none" stroke="#2aa5e8" strokeWidth="2" />
            <path d="M1672 7h4l6-6v17l-6-6h-4z" fill="#e0492e" stroke="#f7b5a5" strokeWidth=".6" /><path d="M1685 6q2 3.500 0 7" stroke="#b06050" fill="none" />
            <path d="M1698 1h6v12h-6z" fill="#9a9a9a" stroke="#ddd" strokeWidth=".6" /><circle cx="1707" cy="13" r="5" fill="#30a844" /><path d="M1704.500 13l2 2 3-4" stroke="#fff" fill="none" strokeWidth="1.500" />
            <rect x="1720.500" y="1.500" width="15" height="16" rx="2" fill="#3fa0e2" stroke="#d8efff" /><path d="M1723 4h6v4h-6zM1730 9h4v6h-7M1724 10v5" stroke="#fff" fill="none" />
            <path d="M1746 7h3l4-5v15l-4-5h-3z" fill="#fff" /><path d="M1755.500 6q2 3.500 0 7" stroke="#9bb" fill="none" />
            <path d="M1769.500 2v15" stroke="#fff" strokeWidth="1.600" /><path d="M1770 3h6v2h6l-2 3 2 3h-7v-2h-5z" fill="#fff" />
            <path d="M1797 6h10v8h-10zM1799 17h7M1802 14v3" stroke="#fff" fill="#17406f" strokeWidth="1.500" /><path d="M1793 2h4v4h-4zM1795 6v8" stroke="#fff" fill="#17406f" />
          </TrayIcons>
          <Clock>오전 11:38<br />2018-08-03</Clock>
          <ShowDesktop />
        </Tray>
      </Taskbar>
    </Screen>
  );
}
